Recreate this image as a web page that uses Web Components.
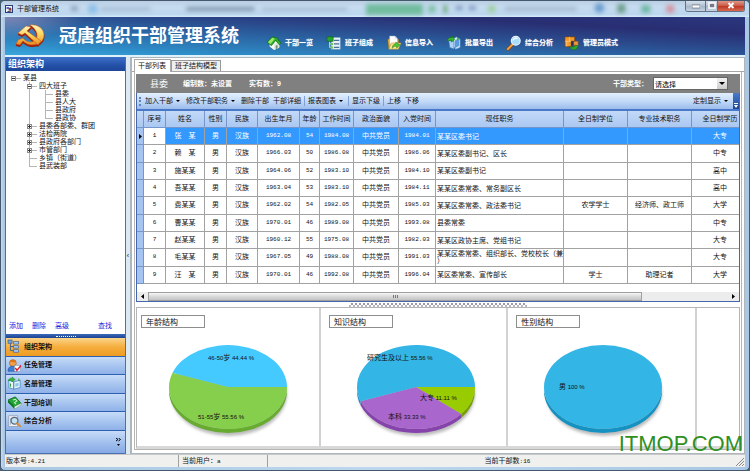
<!DOCTYPE html>
<html lang="zh-CN">
<head>
<meta charset="utf-8">
<title>干部管理系统</title>
<style>
html,body{margin:0;height:100%}
body{font:7px/8px "Liberation Sans","Noto Sans CJK SC",sans-serif;color:#111;overflow:hidden;background:#4a6076}
</style>
</head>
<body>
<app-window></app-window>
<script>
const BASE = `*{box-sizing:border-box}
button{font:inherit;color:inherit;background:none;border:0;padding:0;margin:0;white-space:nowrap}
a{color:inherit;text-decoration:none}ul{list-style:none;margin:0;padding:0}h1,h2,h3{margin:0;font:inherit}`;
function define(name, css, html, after) {
  customElements.define(name, class extends HTMLElement {
    connectedCallback() {
      if (this.shadowRoot) return;
      this.attachShadow({mode: 'open'}).innerHTML =
        `<style>${BASE}${css}</style>` + (typeof html === 'function' ? html(this) : html);
      if (after) after(this);
    }
  });
}

const ICONS = {
  app: `<rect x="1" y="1" width="14" height="14" fill="#f4f4fb" stroke="#2c3a7a" stroke-width="2"/><path d="M3 4h5v4H3z" fill="#4a6fc0"/><circle cx="10" cy="8" r="3" fill="#8b3a3a"/><path d="M5 13l8-1" stroke="#333" stroke-width="2"/>`,
  house: `<path d="M3 8v4l5 4 6-3V7L9 5z" fill="#f6faf6"/><path d="M8 9l6-3v7l-6 3z" fill="#dfe9df"/><path d="M10 11l2-1v4l-2 1z" fill="#6f8a6f"/><path d="M0 7l6-6 5 1 5 6-2 2-4-5-5 6z" fill="#2fae2a" stroke="#0c6b12" stroke-width=".8" stroke-linejoin="round"/><path d="M1 7l5-5 3 1-5 6z" fill="#9be86a"/>`,
  team: `<rect x="5" y="2" width="10" height="13" fill="#e9f2fb" stroke="#a9c3dc" stroke-width=".6"/><path d="M8 5h6M8 9h6M8 13h6" stroke="#4a6f94" stroke-width="1.400"/><path d="M3 3v10h3M3 9h3" stroke="#d9efe0" fill="none"/><rect x="0" y="1" width="7" height="5" fill="#27a52c" stroke="#0d6412" stroke-width=".7"/><rect x="4" y="8" width="3" height="2.500" fill="#6fc35f"/><rect x="4" y="12" width="3" height="2.500" fill="#6fc35f"/>`,
  import: `<path d="M1 4l3-1 2 1h7v10H2z" fill="#f0b93a" stroke="#ab7411" stroke-width=".6"/><path d="M3 0h6l3 3v7H3z" fill="#fff" stroke="#8fa3c0" stroke-width=".6"/><path d="M9 0v3h3z" fill="#cfe0f5"/><path d="M2 15l3-7h11l-3 7z" fill="#ffe88c" stroke="#b9881c" stroke-width=".6"/><path d="M6 14c0-4 2-5 4-5V7l5 3-4 4v-2c-2-.5-3 0-5 2z" fill="#4fc238" stroke="#1c7414" stroke-width=".5"/>`,
  export: `<path d="M7 3l4-2 4 3v9l-5 2-3-3z" fill="#dceefc" stroke="#4484c4" stroke-width=".7"/><path d="M9 5l5-3v9l-5 3z" fill="#5b9be0"/><path d="M2 5l6 1v9l-5-2z" fill="#a9d4f7" stroke="#2f6fb2" stroke-width=".7"/><path d="M0 6c1-4 4-5 6-4l0-2 3 4-4 3v-2c-2 0-3 0-5 1z" fill="#39b12f" stroke="#13700f" stroke-width=".5"/><path d="M11 1l3 2-2 3z" fill="#44b33a"/>`,
  lens: `<path d="M1 15l6-6" stroke="#9a4d12" stroke-width="3.500" stroke-linecap="round"/><path d="M1 15l6-6" stroke="#f2a545" stroke-width="2" stroke-linecap="round"/><circle cx="10" cy="5.500" r="5" fill="#a8dcfa" stroke="#e6f0fa" stroke-width="1.500"/><path d="M7 5c1-3 4-3 5-2" stroke="#fff" stroke-width="1.500" fill="none"/>`,
  blocks: `<path d="M0 1h11v5H7v6H0z" fill="#f29a2b" stroke="#8b4b07" stroke-width=".8"/><path d="M5 1v5M0 6h7M2 6v6" stroke="#ffd28a" stroke-width=".8"/><path d="M7 6h4v5H7z" fill="#29305f"/><path d="M10 6h5v5h-5z" fill="#f0993a" stroke="#8b4b07" stroke-width=".6"/><path d="M5 13c4-1 6 0 7-3l3 2-2 3c-3 1-5 1-8-2z" fill="#2ea52c" stroke="#0e6711" stroke-width=".5"/>`,
  tree: `<path d="M3 4v9h5M3 8h5" stroke="#44648c" stroke-width="1.200" fill="none"/><rect x="0" y="0" width="5" height="4" fill="#6f9fd8" stroke="#355f94" stroke-width=".8"/><g fill="#a8c9ee" stroke="#355f94" stroke-width=".8"><rect x="7" y="2" width="6" height="3"/><rect x="7" y="7" width="6" height="3"/><rect x="7" y="12" width="6" height="3"/></g>`,
  person: `<circle cx="6" cy="5" r="4.200" fill="#f2a14a" stroke="#a85c18" stroke-width=".8"/><path d="M2 4c1-4 7-4 8 0-3 0-5-1-8 0z" fill="#d97718"/><path d="M0 15c0-5 3-6 6-6s4 1 5 3v3z" fill="#3c7edb" stroke="#1c4b96" stroke-width=".7"/><rect x="8" y="8" width="7" height="7" fill="#fff" stroke="#8a97b0" stroke-width=".7"/><path d="M9 11l2 3 5-6" stroke="#d8202a" stroke-width="1.800" fill="none"/>`,
  book: `<path d="M1 4l6 2v9l-6-2zM15 4L7 6v9l8-2z" fill="#e7f4fc" stroke="#3d86b8" stroke-width=".9"/><path d="M9 8l4-1v4l-4 1z" fill="#8cc6ea"/><path d="M0 5c1-4 4-4 5-3V0l4 3-4 3V5C3 4 2 4 0 5z" fill="#3bb044" stroke="#157a20" stroke-width=".5"/><path d="M3 8v4M13 2l1 3" stroke="#38a048" stroke-width="1.400"/>`,
  greenbook: `<path d="M0 5l9-4 7 8-8 4z" fill="#23a53a" stroke="#0a5f1b" stroke-width=".9"/><path d="M0 5v3l8 8v-3z" fill="#0d7a25"/><path d="M8 13l8-4v2l-8 5z" fill="#e8f5e8" stroke="#4b8d55" stroke-width=".5"/><path d="M6 5l3-1 2 2-3 2 2 2" stroke="#c5f5b4" stroke-width="1.300" fill="none"/>`,
  search: `<rect x="1" y="1" width="11" height="13" fill="#eef2f6" stroke="#8a94a3" stroke-width=".8"/><path d="M3 4v8" stroke="#9ab" stroke-width="1"/><circle cx="8" cy="7" r="4.200" fill="#bfe2f5" stroke="#5d6a7a" stroke-width="1.500"/><path d="M11 10l4 4" stroke="#d98a2a" stroke-width="2.200" stroke-linecap="round"/>`
};
define('x-icon', `:host{display:block;flex:none;width:var(--icon,14px);height:var(--icon,14px)}svg{display:block;width:100%;height:100%;overflow:visible}`,
  el => `<svg viewBox="0 0 16 16" aria-hidden="true">${ICONS[el.getAttribute('name')]}</svg>`);

define('party-emblem', `:host{display:block;flex:none;width:29px;height:22px}svg{display:block;width:100%;height:100%;overflow:visible}`,
`<svg viewBox="0 0 29 22" aria-hidden="true"><defs><linearGradient id="g" x1="0" y1="0" x2="0" y2="1"><stop offset="0" stop-color="#fff6b8"/><stop offset=".5" stop-color="#fbd35a"/><stop offset="1" stop-color="#e58a22"/></linearGradient></defs>
<g stroke-linejoin="round"><g transform="translate(0 1.500)" fill="#a01c0a" stroke="#a01c0a"><path d="M14 0c8-1 14 4 14 10 0 7-6 10-12 10-4 0-7-2-9-4l-3 4-4-1 2-4 5-2c3 4 8 5 11 3 5-3 4-11-4-16z"/><path d="M2 8l8-7 5 1-4 4 14 10-3 4L9 8 6 10z"/></g>
<g fill="url(#g)" stroke="#c4501a" stroke-width=".5"><path d="M14 0c8-1 14 4 14 10 0 7-6 10-12 10-4 0-7-2-9-4l-3 4-4-1 2-4 5-2c3 4 8 5 11 3 5-3 4-11-4-16z"/><path d="M2 8l8-7 5 1-4 4 14 10-3 4L9 8 6 10z"/></g></g></svg>`);

define('title-bar', `:host{display:flex;height:17px;flex:none;align-items:flex-start;position:relative;overflow:hidden;
 background:linear-gradient(#b9cde2,#c6dbef 40%,#bcd7ef 85%,#d9edf9)}
.name{display:flex;align-items:center;gap:4px;height:17px;padding-left:4px;flex:1;position:relative}
x-icon{--icon:8px}
.glass{position:absolute;inset:0;filter:blur(2px)}
.glass svg{width:100%;height:100%;display:block}
.ctl{display:flex;position:relative;margin-right:4px;border:1px solid #63748a;border-top:0;border-radius:0 0 3px 3px;overflow:hidden}
.ctl button{height:11px;width:20px;display:grid;place-items:center;background:linear-gradient(#dfe8f1,#b3c3d4 50%,#9fb2c6 51%,#c4d3e2);border-right:1px solid #63748a}
.ctl button:nth-child(2){width:12px}
.ctl .x{width:26px;border:0;background:linear-gradient(#e2a497,#cd5d4a 50%,#b93320 51%,#d8694f)}
.ctl svg{width:8px;height:7px}`,
`<div class="glass"><svg viewBox="0 0 750 17" preserveAspectRatio="none"><rect x="70" y="6" width="7" height="5" fill="#8fa5bd"/><circle cx="92" cy="9" r="5" fill="#8fbfe8"/><rect x="100" y="7" width="50" height="4" fill="#a9bfd6"/><rect x="186" y="7" width="68" height="4" fill="#8398ae"/><rect x="262" y="8" width="85" height="3" fill="#a4b9cf"/><rect x="366" y="4" width="57" height="11" fill="#72bb9e"/><circle cx="432" cy="9" r="4" fill="#7fc2a8"/><path d="M444 5h3v8h-3z" fill="#5d9e60"/><path d="M456 6h7v4h-7zM469 6h7v4h-7z" fill="#7c97bf"/><circle cx="492" cy="9" r="4" fill="#a0cfa4"/><rect x="505" y="7" width="72" height="4" fill="#a6b9ce"/><circle cx="600" cy="8" r="5" fill="#6f9fd0"/><rect x="618" y="4" width="8" height="9" fill="#71a08f"/><rect x="642" y="5" width="9" height="8" fill="#71b9a5"/><rect x="667" y="5" width="8" height="8" fill="#d298a4"/></svg></div>
<div class="name"><x-icon name="app"></x-icon><span>干部管理系统</span></div>
<div class="ctl"><button aria-label="最小化"><svg viewBox="0 0 8 7"><rect x="0" y="3" width="8" height="3" fill="#fff" stroke="#556" stroke-width=".6"/></svg></button><button aria-label="最大化"><svg viewBox="0 0 8 7"><rect x="1" y="1" width="6" height="5" fill="#778" stroke="#fff" stroke-width="1.500"/></svg></button><button class="x" aria-label="关闭"><svg viewBox="0 0 8 7"><path d="M1.500 1l5 5M6.500 1l-5 5" stroke="#fff" stroke-width="1.800"/></svg></button></div>`);

define('app-header', `:host{display:flex;height:38px;flex:none;align-items:center;color:#fff;padding-left:11px;
 background:radial-gradient(ellipse 80px 22px at 0 0,#b7a8c899,transparent),linear-gradient(to top right,#3ba6dc 0,#2e8fc9 14%,#2b66a5 40%,#2a4a8c 58%,#292e72 78%,#29377e)}
h1{font-size:18px;line-height:22px;font-weight:700;margin:0 0 0 14px;width:208px;white-space:nowrap}
nav{display:flex;gap:14px;padding-top:13px}
a{display:flex;align-items:center;gap:4px;font-weight:700;white-space:nowrap;text-shadow:0 0 1px #fff8}
a:last-child{margin-left:-2px}`,
`<party-emblem></party-emblem><h1>冠唐组织干部管理系统</h1><nav>${[['house','干部一览'],['team','班子组成'],['import','信息导入'],['export','批量导出'],['lens','综合分析'],['blocks','管理员模式']].map(([i,t])=>`<a href="#"><x-icon name="${i}"></x-icon>${t}</a>`).join('')}</nav>`);

define('org-tree', `:host{display:block;flex:1;min-height:0;padding:3px 0 0 5px}
li{position:relative}
.row{display:flex;align-items:center;height:8px;white-space:nowrap}
.row button,.row i{width:5px;height:5px;flex:none;margin-right:7px;position:relative}
.row button{background:#fff;border:1px solid #8c8c8c}
.row button::before{content:"";position:absolute;left:0;top:1px;width:3px;height:1px;background:#333}
.row button.plus::after{content:"";position:absolute;left:1px;top:0;width:1px;height:3px;background:#333}
.row::before{content:"";position:absolute;left:5px;width:5px;top:4px;border-top:1px solid #b5b5b5}
.leaf>.row::before{left:2px;width:8px}
ul ul{margin-left:16px}
ul ul>li::after{content:"";position:absolute;left:2px;top:0;bottom:0;border-left:1px solid #b5b5b5}
ul ul>li:last-child::after{bottom:auto;height:4px}
button{z-index:1}`,
(() => {
  const data = ['某县', [['四大班子', [['县委'],['县人大'],['县政府'],['县政协']]],['县委各部委、群团',1],['法检两院',1],['县政府各部门',1],['市管部门',1],['乡镇（街道）'],['县武装部']]];
  const node = ([t, k]) => `<li class="${k ? '' : 'leaf'}"><div class="row">${k ? `<button class="${k === 1 ? 'plus' : ''}" aria-label="${k === 1 ? '展开' : '折叠'}"></button>` : '<i></i>'}<span>${t}</span></div>${Array.isArray(k) ? `<ul>${k.map(node).join('')}</ul>` : ''}</li>`;
  return `<ul>${node(data)}</ul>`;
})());

define('side-nav', `:host{display:block;background:#2d5fb0}
ul{display:grid;grid-template-rows:repeat(5,1fr);height:92px;gap:1px}
li{display:flex}
button{display:flex;flex:1;align-items:center;gap:3px;padding-left:2px;font-weight:700;background:linear-gradient(#c7dcf8,#a9c6f0 50%,#8fb1e8);--icon:13px}
button.on{background:linear-gradient(#fbd58b,#f5ad3c 50%,#ee9c22)}
.grip{height:4px;display:grid;place-items:center;background:linear-gradient(#3b69b8,#1c4493)}
.grip::before{content:"";width:20px;border-top:1px dotted #fff}
.more{height:22px;margin-top:1px;background:linear-gradient(#c7dcf8,#9dbcec 60%,#86aae3);display:flex;justify-content:flex-end;align-items:center;padding-right:4px}
.more button{flex:none;background:none;padding:0}`,
`<div class="grip"></div><ul>${[['tree','组织架构'],['person','任免管理'],['book','名册管理'],['greenbook','干部培训'],['search','综合分析']].map(([i,t],n)=>`<li><button class="${n?'':'on'}"><x-icon name="${i}"></x-icon>${t}</button></li>`).join('')}</ul>
<div class="more"><button aria-label="更多"><svg width="5" height="9" viewBox="0 0 5 9"><path d="M0 0l2 1.500L0 3M2.500 0l2 1.500-2 1.500" fill="none" stroke="#000"/><path d="M1 6h3L2.500 8z"/></svg></button></div>`);

define('side-panel', `:host{display:flex;flex-direction:column;width:121px;flex:none;background:#fff;border:1px solid #4a6fb5;border-top:0}
h2{height:14px;font:700 9px/13px "Noto Sans CJK SC",sans-serif;color:#fff;padding-left:2px;background:linear-gradient(#3d70c8,#2450a8 60%,#1d4698)}
.links{display:flex;gap:9px;color:#2222dd;padding:0 13px 4px 3px;height:12px}
.links a:last-child{margin-left:auto}`,
`<h2>组织架构</h2><org-tree></org-tree><div class="links"><a href="#">添加</a><a href="#">删除</a><a href="#">高级</a><a href="#">查找</a></div><side-nav></side-nav>`);

define('tab-strip', `:host{display:flex;align-items:flex-end;height:14px;flex:none;padding-left:2px;background:#fff;border-bottom:1px solid #a5a5a5}
button{height:11px;padding:0 3px;border:1px solid #999;border-bottom:0;background:#f0f0f0;line-height:10px}
button.on{height:13px;background:#fff;margin-bottom:-1px;border-color:#aaa;padding:0 4px 1px 3px}`,
`<button class="on">干部列表</button><button>班子结构模型</button>`);

define('unit-bar', `:host{display:flex;align-items:center;height:19px;flex:none;background:#808080;color:#fff;font-weight:700;padding:0 12px 0 14px;white-space:nowrap}
h2{font:400 9px/12px "Noto Sans CJK SC",sans-serif;margin-right:15px}
span{margin-right:17px}
label{margin-left:auto;margin-right:5px}
select{font:400 7px/8px "Noto Sans CJK SC",sans-serif;appearance:none;width:75px;height:13px;border:1px solid #666;border-radius:0;padding:0 1px;color:#000;
 background:linear-gradient(#f2f2f2,#ccc) right/10px 11px no-repeat,#fff}
.pick{position:relative;display:block}
.pick svg{position:absolute;right:3px;top:5px;width:6px;height:4px;pointer-events:none}`,
`<h2>县委</h2><span>编制数：未设置</span><span>实有数：9</span><label for="kind">干部类型：</label><div class="pick"><select id="kind"><option>请选择</option></select><svg viewBox="0 0 6 4"><path d="M0 0h6L3 3z"/></svg></div>`);

define('tool-bar', `:host{display:flex;align-items:center;gap:4px;height:18px;flex:none;padding-left:2px;border-bottom:2px solid #4a78c8;background:linear-gradient(#e3effd,#c4daf8 50%,#9bbcec)}
.grip{height:9px;border-left:2px dotted #5b84c4}
button{display:flex;align-items:center}
button svg{width:4px;height:2px;margin:0 2px 0 3px}
hr{width:1px;height:10px;margin:0 -1px;border:0;background:#7fa0d4}
.r{margin-left:auto}
.end{align-self:stretch;width:6px;background:linear-gradient(#4c7ccd,#1d4596);display:grid;align-items:end;justify-items:center;margin-left:-1px}
.end svg{width:4px;height:5px;margin:0 0 1px}`,
(() => { const a = '<svg viewBox="0 0 4 2"><path d="M0 0h4L2 2z"/></svg>';
return `<div class="grip"></div><button>加入干部${a}</button><button>修改干部职务${a}</button><button>删除干部</button><button>干部详细</button><hr><button>报表图表${a}</button><hr><button>显示下级</button><hr><button>上移</button><button>下移</button><button class="r">定制显示${a}</button><button class="end" aria-label="工具栏选项"><svg viewBox="0 0 4 5"><path d="M0 0h4v1H0zM0 2h4L2 5z" fill="#fff"/></svg></button>`; })());

define('cadre-table', `:host{display:block;overflow:hidden;flex:none}
table{border-collapse:separate;border-spacing:0;table-layout:fixed;width:max(100%,612px);height:173px}
th,td{padding:0;text-align:center;border-right:1px solid #a2a2a2;border-bottom:1px solid #a2a2a2;overflow:hidden;white-space:nowrap;font-weight:400}
th,td{height:17px}
thead th{background:linear-gradient(#c3d9f8,#abc8f2);border-color:#7596cc}
tbody td:first-child{background:#a6c4f1;border-color:#7596cc}
.num{font:6px/8px "Liberation Mono",monospace}
.job{text-align:left;padding-left:1px;white-space:normal;line-break:anywhere;line-height:7px}
.on td{background:#3399ff;color:#fff}
.on td:nth-child(2){background:#fff;color:#000}
svg{display:block;margin:auto;width:3px;height:5px}`,
(() => {
  const w = [7,22,39,22,31,42,20,34,45,37,128,64,64];
  const h = ['','序号','姓名','性别','民族','出生年月','年龄','工作时间','政治面貌','入党时间','现任职务','全日制学位','专业技术职务','全日制学历'];
  const rows = [
    ['张　某','1962.08',54,'1984.08','1984.01','某某区委书记','','','大专'],
    ['赖　某','1966.03',50,'1986.08','1986.06','某某区委副书记、区长','','','中专'],
    ['施某某','1964.06',52,'1983.10','1984.10','某某区委副书记','','','高中'],
    ['吾某某','1963.04',53,'1983.10','1984.11','某某区委常委、常务副区长','','','高中'],
    ['费某某','1962.02',54,'1982.05','1985.03','某某区委常委、政法委书记','农学学士','经济师、政工师','大学'],
    ['曹某某','1970.01',46,'1989.08','1993.08','县委常委','','','中专'],
    ['赵某某','1960.12',55,'1975.08','1982.03','某某区政协主席、党组书记','','','大专'],
    ['毛某某','1967.05',49,'1988.08','1991.03','某某区委常委、组织部长、党校校长（兼）','','','大专'],
    ['汪　某','1970.01',46,'1992.08','1996.04','某区委常委、宣传部长','学士','助理记者','大学']];
  return `<table><colgroup>${w.map(x=>`<col style="width:${x}px">`).join('')}<col></colgroup><thead><tr>${h.map(x=>`<th scope="col">${x}</th>`).join('')}</tr></thead><tbody>${rows.map((r,i)=>`<tr class="${i?'':'on'}"><td>${i?'':'<svg viewBox="0 0 3 5"><path d="M0 0l3 2.500L0 5z"/></svg>'}</td><td class="num">${i+1}</td><td>${r[0]}</td><td>男</td><td>汉族</td><td class="num">${r[1]}</td><td class="num">${r[2]}</td><td class="num">${r[3]}</td><td>中共党员</td><td class="num">${r[4]}</td><td class="job">${r[5]}</td><td>${r[6]}</td><td>${r[7]}</td><td>${r[8]}</td></tr>`).join('')}</tbody></table>`;
})());

define('h-scroll', `:host{display:grid;grid-template-columns:11px 1fr 86px 11px;height:9px;flex:none;margin-top:8px;background:#ececec}
button{display:grid;place-items:center}
.thumb{border:1px solid #a0a0a0;background:linear-gradient(#f6f6f6,#d9d9d9 50%,#c3c3c3);display:grid;place-items:center}
.thumb::before{content:"";width:5px;height:3px;background:repeating-linear-gradient(90deg,#777 0 1px,transparent 1px 2px)}
svg{width:3px;height:5px}`,
`<button aria-label="向左滚动"><svg viewBox="0 0 3 5"><path d="M3 0v5L0 2.500z"/></svg></button><div class="thumb"></div><span></span><button aria-label="向右滚动"><svg viewBox="0 0 3 5"><path d="M0 0v5l3-2.500z"/></svg></button>`);

define('pie-card', `:host{display:block;background:#fff;border-right:2px solid #d2d2d2;padding:7px 0 0 8px;overflow:hidden;min-width:0}
h3{font:400 8px/11px "Noto Sans CJK SC",sans-serif;width:64px;height:13px;border:1px solid #8e8e8e;padding-left:4px}
svg{display:block;width:160px;height:110px}
text{font:6px "Liberation Sans",sans-serif;fill:#111}
.c{font:7px "Noto Sans CJK SC",sans-serif}`,
el => {
  const cx = 87, cy = 59, rx = 59, ry = 42, d = 4;
  const slices = JSON.parse(el.getAttribute('slices'));
  const pt = (a, y = 0) => `${(cx + rx * Math.cos(a * Math.PI / 180)).toFixed(2)} ${(cy + y + ry * Math.sin(a * Math.PI / 180)).toFixed(2)}`;
  let tops = '', sides = '', labels = '';
  for (const s of slices) {
    const [from, to, fill, dark, x, y, name, rest] = s;
    tops += to - from >= 360 ? `<ellipse cx="${cx}" cy="${cy}" rx="${rx}" ry="${ry}" fill="${fill}"/>`
      : `<path fill="${fill}" d="M${cx} ${cy}L${pt(from)}A${rx} ${ry} 0 ${to - from > 180 ? 1 : 0} 1 ${pt(to)}Z"/>`;
    const end = Math.min(to, 180);
    if (from < 180) sides += `<path fill="${dark}" d="M${pt(from)}A${rx} ${ry} 0 0 1 ${pt(end)}L${pt(end, d)}A${rx} ${ry} 0 0 0 ${pt(from, d)}Z"/>`;
    labels += `<text x="${x}" y="${y}">${name.replace(/[^\x00-\x7f]+/, '<tspan class="c">$&</tspan>')} ${rest}</text>`;
  }
  return `<h3>${el.getAttribute('heading')}</h3><svg viewBox="0 0 160 110" role="img" aria-label="${el.getAttribute('heading')}"><defs><filter id="b" x="-10%" y="-10%" width="120%" height="130%"><feGaussianBlur stdDeviation="1.500"/></filter></defs><ellipse cx="${cx + 1}" cy="${cy + d + 3}" rx="${rx - 1}" ry="${ry}" fill="#0004" filter="url(#b)"/>${sides}${tops}${labels}</svg>`;
});

define('chart-row', `:host{display:grid;grid-template-columns:185fr 188fr 190fr 42fr;flex:1;min-height:0;border:1px solid #b5b5b5;border-bottom:3px solid #d8d8d8}
pie-card:first-of-type{padding-left:4px}div{background:#fff}`,
`<pie-card heading="年龄结构" slices='[[0,200,"#86cf4c","#67ab31",57,91,"51-55岁","55.56 %"],[200,360,"#45caff","#2aa5d8",67,32,"46-50岁","44.44 %"]]'></pie-card>
<pie-card heading="知识结构" slices='[[0,40,"#99cc00","#76a000",91,72,"大专","11.11 %"],[40,160,"#a966cc","#8543ab",59,91,"本科","33.33 %"],[160,360,"#33b5e5","#1d90c0",38,32,"研究生及以上","55.56 %"]]'></pie-card>
<pie-card heading="性别结构" slices='[[0,360,"#33b5e5","#1692c2",43,61,"男","100 %"]]'></pie-card><div></div>`);

define('main-panel', `:host{display:flex;flex-direction:column;flex:1;min-width:0;background:#fff;border:1px solid #adb5bd;border-width:1px 1px 1px 2px}
.page{display:flex;flex-direction:column;flex:1;min-height:0;margin:0 2px 3px;border:1px solid #b5b5b5;border-top:0;padding:2px 1px 0}
.grid{border:1px solid #4667ad;border-top:0;flex:none}
.split{height:5px;flex:none;display:grid;place-items:center}
.split::before{content:"";width:178px;height:4px;background:conic-gradient(#9a9aa8 25%,transparent 0 50%,#b8b8c4 0 75%,transparent 0) 0 0/4px 4px}`,
`<tab-strip></tab-strip><div class="page"><unit-bar></unit-bar><div class="grid"><tool-bar></tool-bar><cadre-table></cadre-table><h-scroll></h-scroll></div><div class="split"></div><chart-row></chart-row></div>`);

define('status-bar', `:host{display:flex;height:13px;flex:none;background:#f0f0ee;border-top:1px solid #c8c8c8;position:relative}
div{border-right:1px solid #a0a0a0;padding-left:2px;line-height:11px;margin-right:1px;white-space:nowrap}
.v{width:174px;padding-left:1px}.u{width:88px}.n{flex:1;border:0;text-align:center}
i{font:6px "Liberation Mono",monospace}
svg{position:absolute;right:1px;bottom:1px;width:8px;height:8px}`,
`<div class="v">版本号<i>:4.21</i></div><div class="u">当前用户：<i>a</i></div><div class="n">当前干部数<i>:16</i></div><svg viewBox="0 0 8 8"><path d="M0 8l8-8M3 8l5-5M6 8l2-2" stroke="#888"/></svg>`);

define('water-mark', `:host{position:absolute;right:6px;bottom:15px;font:22px/22px "Liberation Sans",sans-serif;color:#2f8f1f;pointer-events:none}`, `<slot></slot>`);

define('app-window', `:host{display:flex;flex-direction:column;box-sizing:border-box;height:100vh;position:relative;border:1px solid #46586c;border-radius:5px;overflow:hidden;background:linear-gradient(90deg,#c6dcf0,#a9c7e4 3px,#bcd7ef 50%,#a9c7e4)}
.in{display:flex;flex-direction:column;flex:1;min-height:0;margin:0 4px 3px;background:#dff1f9}
.body{display:flex;flex:1;min-height:0;padding-top:2px}
.bar{width:4px;flex:none;background:#dce8f2;display:flex;align-items:center}
.bar button{width:4px;height:20px;font-size:7px}
title-bar{margin-top:-1px}`,
`<title-bar></title-bar><div class="in"><app-header></app-header><div class="body"><side-panel></side-panel><div class="bar"><button aria-label="收起侧栏">‹</button></div><main-panel></main-panel></div><status-bar></status-bar></div><water-mark>ITMOP.COM</water-mark>`);
</script>
</body>
</html>
